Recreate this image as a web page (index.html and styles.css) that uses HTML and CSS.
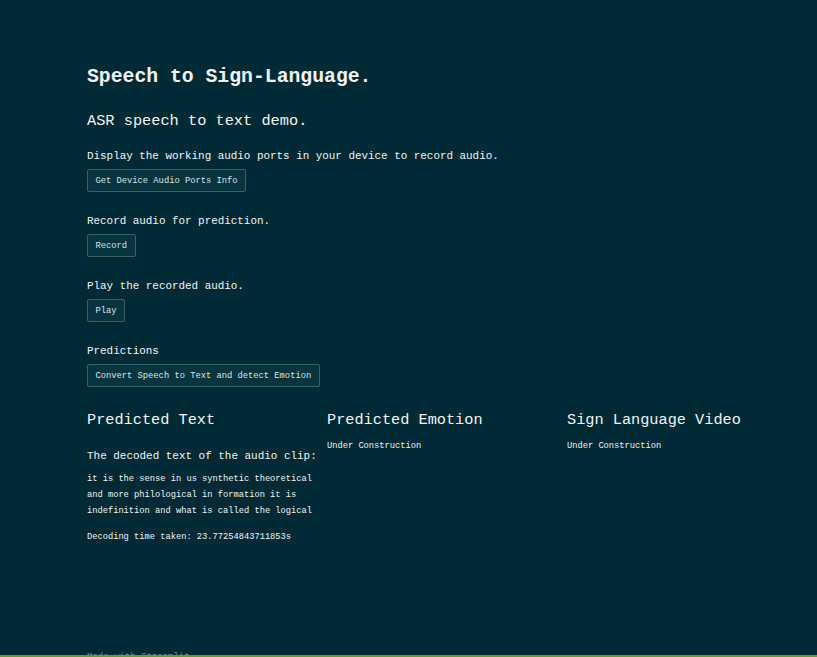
FILE: index.html
```html
<!DOCTYPE html>
<html>
<head>
<meta charset="utf-8">
<link rel="stylesheet" href="styles.css">
</head>
<body>
<div class="page">
  <main class="main">
    <h1 class="title">Speech to Sign-Language.</h1>
    <h2 class="subtitle">ASR speech to text demo.</h2>

    <p class="label first">Display the working audio ports in your device to record audio.</p>
    <button class="btn">Get Device Audio Ports Info</button>

    <p class="label">Record audio for prediction.</p>
    <button class="btn">Record</button>

    <p class="label">Play the recorded audio.</p>
    <button class="btn">Play</button>

    <p class="label">Predictions</p>
    <button class="btn">Convert Speech to Text and detect Emotion</button>

    <div class="cols">
      <section class="col">
        <h3 class="col-head">Predicted Text</h3>
        <p class="decoded-head">The decoded text of the audio clip:</p>
        <p class="decoded">it is the sense in us synthetic theoretical and more philological in formation it is indefinition and what is called the logical</p>
        <p class="timing">Decoding time taken: 23.77254843711853s</p>
      </section>
      <section class="col">
        <h3 class="col-head">Predicted Emotion</h3>
        <p class="small">Under Construction</p>
      </section>
      <section class="col">
        <h3 class="col-head">Sign Language Video</h3>
        <p class="small">Under Construction</p>
      </section>
    </div>
  </main>
  <footer class="footer"><span class="footer-text">Made with Streamlit</span></footer>
  <div class="bar"></div>
</div>
</body>
</html>
```
FILE: styles.css
```css
html, body {
  margin: 0;
  padding: 0;
  background: #002b36;
}
body {
  font-family: "Liberation Mono", "Courier New", monospace;
  color: #f3f3f3;
}
.page {
  display: flex;
  flex-direction: column;
  height: 100vh;
  overflow: hidden;
}
.main {
  flex: 1;
  padding: 65px 0 0 87px;
  display: flex;
  flex-direction: column;
  align-items: flex-start;
}
h1, h2, h3, p { margin: 0; font-weight: normal; }
.title {
  font-size: 19.75px;
  line-height: 24px;
  font-weight: bold;
}
.subtitle {
  font-size: 15.3px;
  line-height: 20px;
  margin-top: 22px;
}
.label {
  font-size: 10.9px;
  line-height: 16px;
  margin-top: 21px;
}
.label.first { margin-top: 17px; }
.btn {
  margin-top: 5px;
  font-family: "Liberation Mono", "Courier New", monospace;
  font-size: 8.77px;
  line-height: 13px;
  padding: 5px 7.5px 3px;
  color: #d6e6e6;
  background: #063540;
  border: 1px solid #2e6570;
  border-radius: 2px;
}
.cols {
  margin-top: 23px;
  display: grid;
  grid-template-columns: 230px 230px 230px;
  column-gap: 10px;
}
.col-head {
  font-size: 15.25px;
  line-height: 20px;
  white-space: nowrap;
}
.decoded-head {
  font-size: 10.95px;
  line-height: 16px;
  margin-top: 18px;
  white-space: nowrap;
}
.decoded {
  font-size: 8.72px;
  line-height: 16px;
  margin-top: 7px;
  width: 232px;
}
.timing {
  font-size: 8.72px;
  line-height: 16px;
  margin-top: 10px;
  white-space: nowrap;
}
.small {
  font-size: 8.72px;
  line-height: 16px;
  margin-top: 8px;
}
.footer {
  height: 3px;
  overflow: hidden;
  padding-left: 87px;
}
.footer-text {
  display: block;
  font-size: 9px;
  line-height: 12px;
  margin-top: -1px;
  color: #6f8790;
}
.bar {
  height: 2px;
  background: #6a9c22;
}
```
